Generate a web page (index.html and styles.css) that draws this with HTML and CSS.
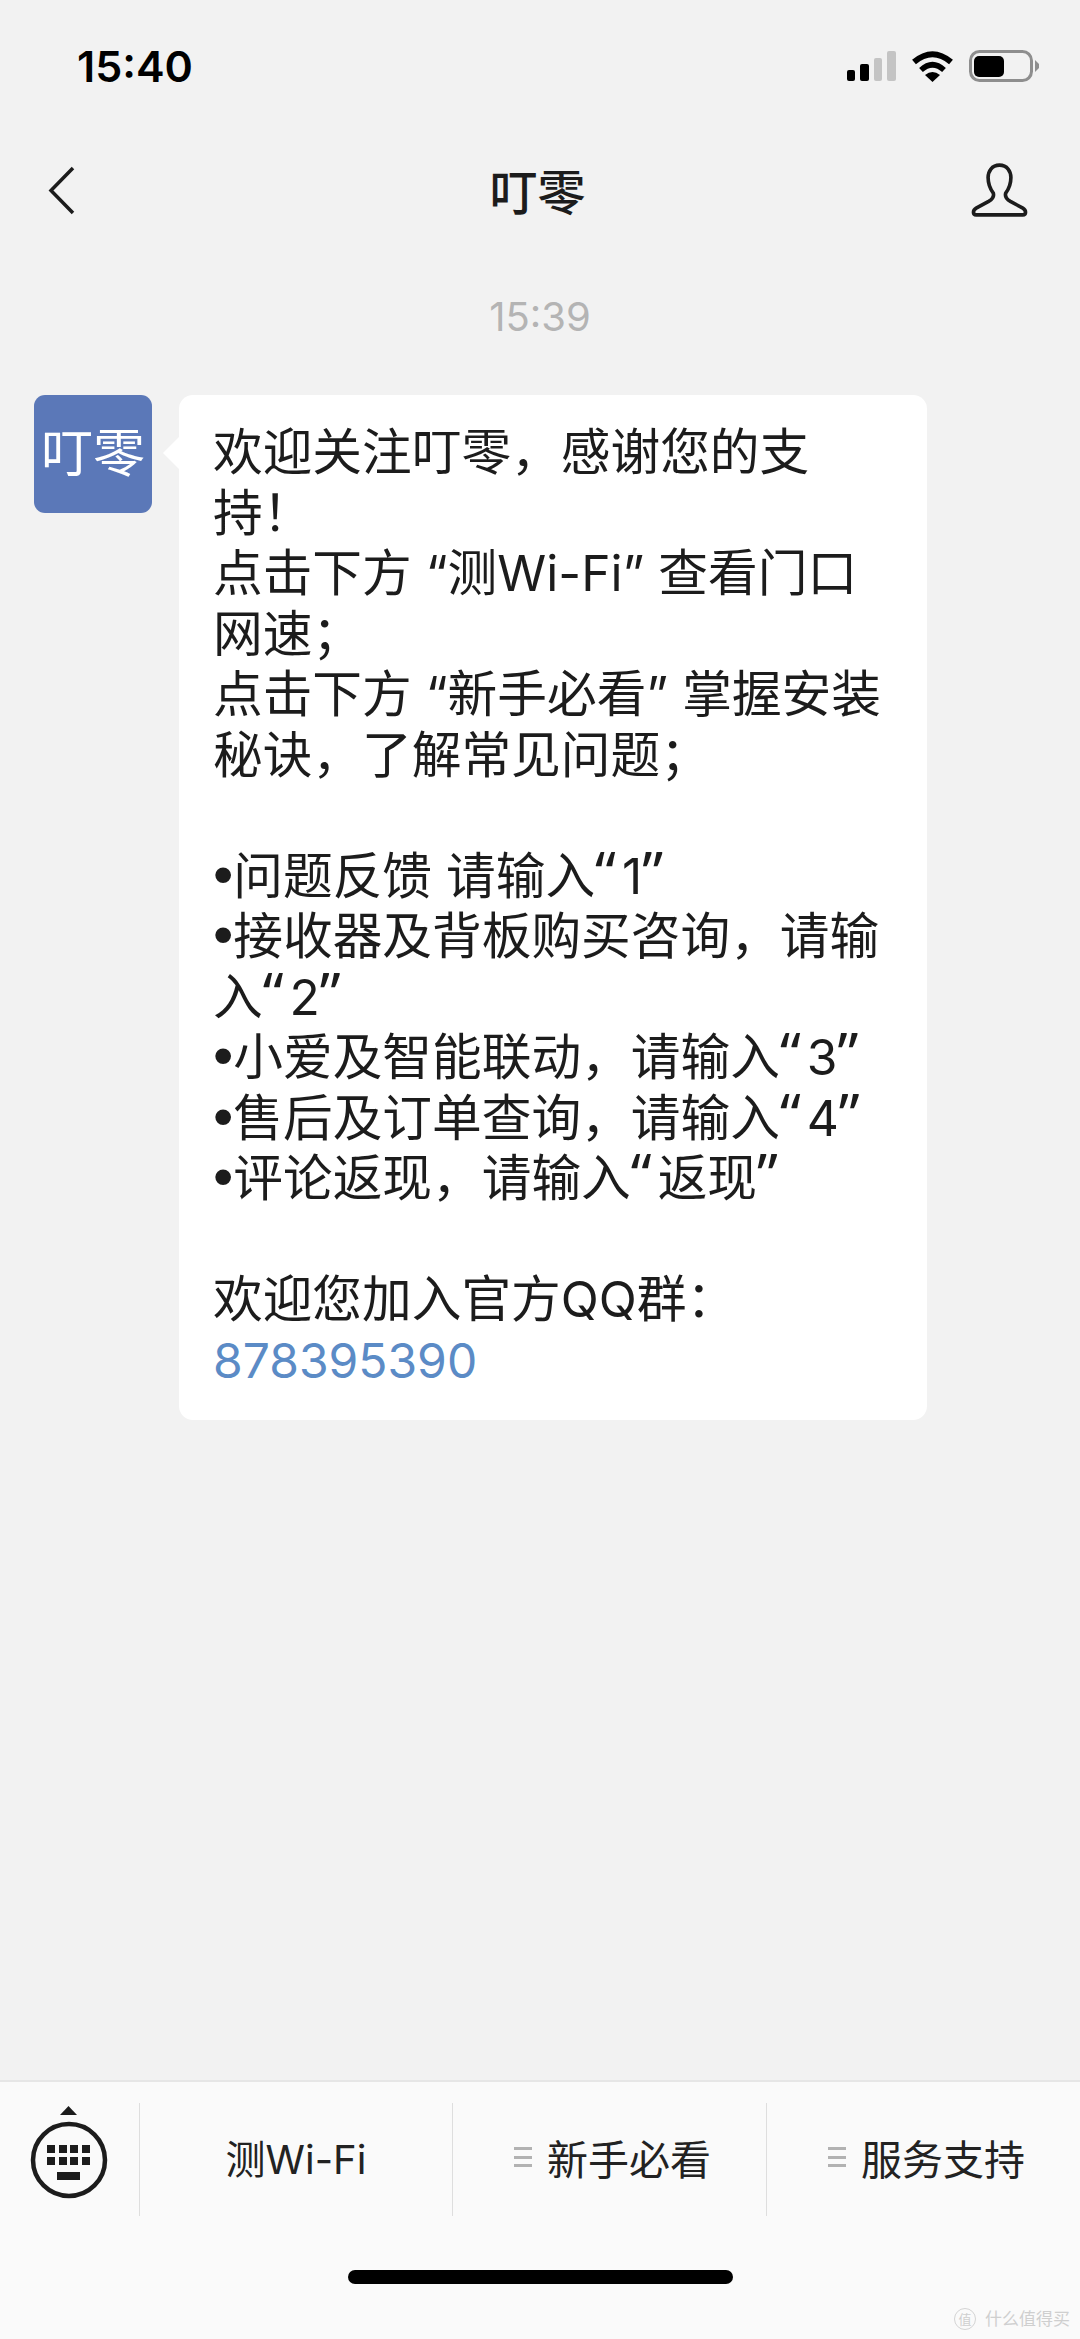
FILE: index.html
```html
<!DOCTYPE html>
<html lang="zh-CN">
<head>
  <meta charset="UTF-8">
  <meta name="viewport" content="width=device-width, initial-scale=1.0">
  <title>叮零</title>
  <link rel="stylesheet" href="styles.css">
</head>
<body>
  <div class="page">
    <header class="status-bar">
      <span class="clock">15:40</span>
      <svg class="status-icons" width="192" height="32" viewBox="0 0 192 32">
        <rect x="0" y="20" width="8" height="11" rx="2" fill="#000"/>
        <rect x="13" y="14" width="9" height="17" rx="2" fill="#000"/>
        <rect x="27" y="8" width="8" height="23" rx="2" fill="#c4c4c4"/>
        <rect x="40" y="1" width="9" height="30" rx="2" fill="#c4c4c4"/>
        <path d="M67 12 Q85.500 -3.500 104 12" fill="none" stroke="#000" stroke-width="6"/>
        <path d="M74 20 Q85.500 9.500 97 20" fill="none" stroke="#000" stroke-width="5.500"/>
        <path d="M78 25 Q85.500 19 93 25 L85.500 32 Z" fill="#000"/>
        <rect x="123.500" y="1.500" width="61" height="29" rx="9" fill="none" stroke="#8e8e8e" stroke-width="3"/>
        <rect x="127" y="6" width="30" height="21" rx="5" fill="#000"/>
        <path d="M188 10 L192 14 V18 L188 22 Z" fill="#8e8e8e"/>
      </svg>
    </header>

    <nav class="nav-bar">
      <svg class="nav-back" width="28" height="49" viewBox="0 0 28 49">
        <polyline points="26,2 4,24.500 26,47" fill="none" stroke="#1c1c1c" stroke-width="3.500"/>
      </svg>
      <h1 class="nav-title">叮零</h1>
      <svg class="nav-profile" width="57" height="54" viewBox="0 0 55 52">
        <path d="M27.500 2 C20 2 16.500 8 16.500 14 C16.500 20 18.500 25 21.500 29 C22.500 32.500 20.500 35 17 37 L5 43.500 C1.500 45.500 1.500 50 5 50 L50 50 C53.500 50 53.500 45.500 50 43.500 L38 37 C34.500 35 32.500 32.500 33.500 29 C36.500 25 38.500 20 38.500 14 C38.500 8 35 2 27.500 2 Z" fill="none" stroke="#1c1c1c" stroke-width="3.500"/>
      </svg>
    </nav>

    <div class="timestamp">15:39</div>

    <main class="chat">
      <div class="avatar">叮零</div>
      <div class="bubble">
        欢迎关注叮零，感谢您的支<br>
        持！<br>
        点击下方 “测Wi-Fi” 查看门口<br>
        网速；<br>
        点击下方 “新手必看” 掌握安装<br>
        秘诀，了解常见问题；<br>
        <br>
        <span class="dot">•</span>问题反馈 请输入<span class="q">“</span>1<span class="q">”</span><br>
        <span class="dot">•</span>接收器及背板购买咨询，请输<br>
        入<span class="q">“</span>2<span class="q">”</span><br>
        <span class="dot">•</span>小爱及智能联动，请输入<span class="q">“</span>3<span class="q">”</span><br>
        <span class="dot">•</span>售后及订单查询，请输入<span class="q">“</span>4<span class="q">”</span><br>
        <span class="dot">•</span>评论返现，请输入<span class="q">“</span>返现<span class="q">”</span><br>
        <br>
        欢迎您加入官方QQ群：<br>
        <a class="qq-link">878395390</a>
      </div>
    </main>

    <footer class="menu-bar">
      <div class="menu-row">
        <div class="keyboard-btn">
          <svg width="80" height="94" viewBox="0 0 80 94">
            <path d="M31 10 L39.500 1 L48 10 Z" fill="#1c1c1c"/>
            <circle cx="40" cy="55" r="36" fill="none" stroke="#1c1c1c" stroke-width="4.500"/>
            <g fill="#1c1c1c">
              <rect x="18" y="40" width="8" height="8"/>
              <rect x="30" y="40" width="8" height="8"/>
              <rect x="41" y="40" width="8" height="8"/>
              <rect x="53" y="40" width="8" height="8"/>
              <rect x="18" y="52" width="8" height="8"/>
              <rect x="30" y="52" width="8" height="8"/>
              <rect x="41" y="52" width="8" height="8"/>
              <rect x="53" y="52" width="8" height="8"/>
              <rect x="28" y="67" width="23" height="8"/>
            </g>
          </svg>
        </div>
        <div class="menu-item menu-item-first">测Wi-Fi</div>
        <div class="menu-item menu-item-second"><span class="menu-icon"></span>新手必看</div>
        <div class="menu-item menu-item-third"><span class="menu-icon"></span>服务支持</div>
      </div>
      <div class="home-indicator"></div>
      <div class="watermark"><span class="watermark-logo">值</span>什么值得买</div>
    </footer>
  </div>
</body>
</html>
```

FILE: styles.css
```css
* {
  box-sizing: border-box;
}

body {
  margin: 0;
  background-color: #f2f2f2;
  font-family: Inter, 'Noto Sans CJK SC', sans-serif;
  color: #1c1c1c;
}

.page {
  display: flex;
  flex-direction: column;
  height: 2339px;
}

.status-bar {
  display: flex;
  align-items: center;
  justify-content: space-between;
  height: 132px;
  padding: 0 41px 0 77px;
}

.clock {
  font-size: 43px;
  font-weight: 600;
  color: #000;
}

.nav-bar {
  display: grid;
  grid-template-columns: 1fr auto 1fr;
  align-items: center;
  height: 116px;
  padding: 0 52px 0 47px;
}

.nav-profile {
  justify-self: end;
}

.nav-title {
  margin: 0;
  padding-bottom: 2px;
  font-size: 48px;
  font-weight: 500;
}

.timestamp {
  height: 138px;
  line-height: 138px;
  text-align: center;
  font-size: 40px;
  color: #b4b4b4;
}

.chat {
  display: flex;
  align-items: flex-start;
  gap: 27px;
  flex: 1;
  padding: 9px 0 0 34px;
}

.avatar {
  display: flex;
  align-items: center;
  justify-content: center;
  width: 118px;
  height: 118px;
  background-color: #5b78b8;
  border-radius: 11px;
  color: #fff;
  font-size: 52px;
  font-weight: 400;
  line-height: 1;
  white-space: nowrap;
}

.bubble {
  position: relative;
  width: 748px;
  padding: 27px 20px 29px 34px;
  background-color: #fff;
  border-radius: 14px;
  font-size: 49.700px;
  line-height: 60.500px;
  white-space: nowrap;
}

/* little arrow pointing at the avatar */
.bubble::before {
  content: '';
  position: absolute;
  left: -11px;
  top: 46px;
  width: 24px;
  height: 24px;
  background-color: #fff;
  transform: rotate(45deg);
}

.dot {
  font-family: 'Liberation Sans', sans-serif;
  font-size: 58px;
  line-height: 1px;
}

/* curlier quotes than Inter, and a bit wider */
.q {
  font-family: 'Noto Sans', sans-serif;
  font-size: 58px;
  letter-spacing: 6px;
  line-height: 1px;
}

.qq-link {
  color: #5b8bc6;
  font-size: 48px;
}

.menu-bar {
  position: relative;
  height: 259px;
  background-color: #fafafa;
  border-top: 2px solid #e6e6e6;
}

.menu-row {
  display: flex;
  height: 113px;
  margin-top: 21px;
}

.keyboard-btn {
  display: flex;
  align-items: flex-end;
  justify-content: center;
  width: 139px;
  padding: 0 2px 17px 0;
}

.menu-item {
  display: flex;
  align-items: center;
  justify-content: center;
  gap: 15px;
  padding: 0 0 5px 6px;
  border-left: 1px solid #dedede;
  font-size: 41px;
  color: #222;
}

.menu-item-first {
  width: 313px;
  padding-left: 0;
  font-size: 40px;
}

.menu-item-second {
  width: 314px;
}

.menu-item-third {
  flex: 1;
}

.menu-icon {
  width: 18px;
  height: 20px;
  border-top: 3px solid #b2b2b2;
  border-bottom: 3px solid #b2b2b2;
  background: linear-gradient(#b2b2b2, #b2b2b2) center / 100% 3px no-repeat;
}

.home-indicator {
  width: 385px;
  height: 14px;
  margin: 54px auto 0;
  background-color: #000;
  border-radius: 7px;
}

.watermark {
  position: absolute;
  right: 10px;
  bottom: 9px;
  display: flex;
  align-items: center;
  gap: 9px;
  font-size: 17px;
  line-height: 22px;
  color: #cfcfcf;
}

.watermark-logo {
  width: 22px;
  height: 22px;
  border: 1px solid #d4d4d4;
  border-radius: 50%;
  font-size: 13px;
  line-height: 20px;
  text-align: center;
}
```
